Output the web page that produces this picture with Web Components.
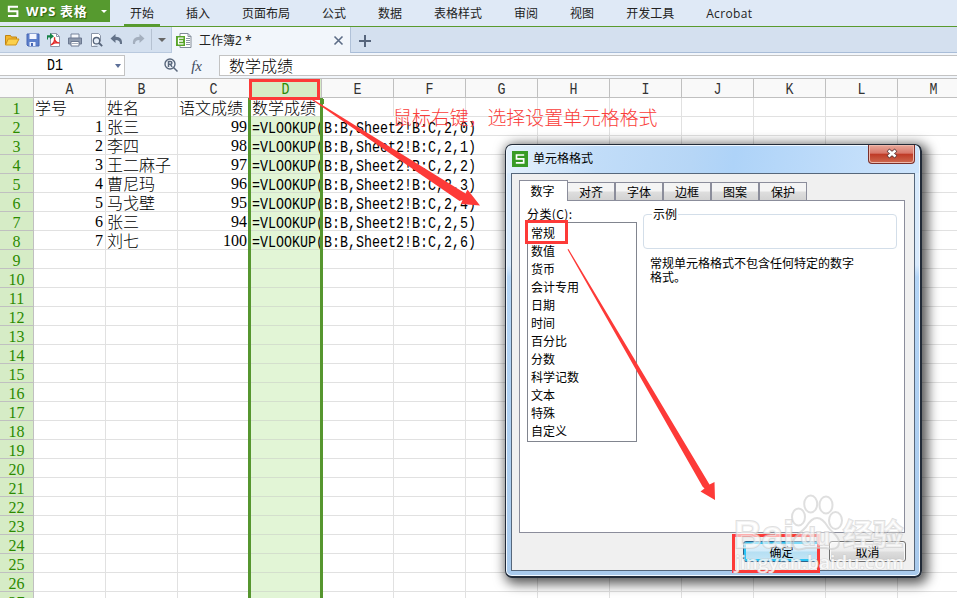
<!DOCTYPE html>
<html lang="zh-CN"><head><meta charset="utf-8"><title>WPS 表格</title>
<style>html,body{margin:0;height:100%;overflow:hidden;background:#fff}</style></head>
<body><wps-app></wps-app>
<script>
const define=(name,html,init)=>customElements.define(name,class extends HTMLElement{
  connectedCallback(){ if(this.shadowRoot)return; this.attachShadow({mode:'open'}).innerHTML=typeof html==='function'?html(this):html; if(init)init(this); }
});
const UI='"Noto Sans","Noto Sans CJK SC",sans-serif';

define('wps-logo',`<style>:host{display:block;flex:none}svg{display:block;width:100%;height:100%}</style>
<svg viewBox="0 0 12 12"><path d="M11 1.2H1.8v4.6h8.6v4.8H1" fill="none" stroke="#fff" stroke-width="2"/></svg>`);

define('menu-bar',`<style>
:host{display:flex;height:26px;background:#dfe9f6;border-bottom:1px solid #5a9a2e;font:12px/28px "Open Sans","Noto Sans CJK SC",sans-serif;color:#222}
.brand{display:flex;align-items:center;box-sizing:border-box;width:110px;height:22px;background:#569a2f;padding-left:7px;color:#fff;font-weight:700;font-size:13px;line-height:22px;text-shadow:1px 1px 1px #2d6010}
wps-logo{width:12px;height:13px;margin-right:7px}
.brand span{white-space:nowrap;width:68px;letter-spacing:.7px}
.brand i{border:3px solid transparent;border-top-color:#fff;border-bottom:0;margin-left:7px}
nav{display:flex;gap:32px;padding-left:20px}
nav span{display:block;white-space:nowrap;height:26px}
nav span:last-child{letter-spacing:.35px}
.on{box-shadow:0 -2px 0 #569a2f inset}
.on{margin:0 -6px;padding:0 6px}
</style><div class="brand"><wps-logo></wps-logo><span>WPS 表格</span><i></i></div>
<nav><span class="on">开始</span><span>插入</span><span>页面布局</span><span>公式</span><span>数据</span><span>表格样式</span><span>审阅</span><span>视图</span><span>开发工具</span><span>Acrobat</span></nav>`);

define('quick-access',`<style>
:host{display:flex;align-items:center;box-sizing:border-box;width:172px;height:26px;background:#d4e0ef;border-right:1px solid #b9c9de;border-bottom:1px solid #b9c9de;padding-left:4px;gap:5px}
svg{width:16px;height:16px;flex:none}
.sep{width:1px;height:21px;background:#b5c1d1;margin:0 -2px 0 0}
.dd{border:4px solid transparent;border-top-color:#666;border-bottom:0;margin-left:3px}
</style>
<svg viewBox="0 0 16 16"><path d="M1.5 13V3.500h5l1 1.500h5v2" fill="#f3b62c" stroke="#c08413"/><path d="M1.500 13l2.700-6H15l-3 6z" fill="#fbd04c" stroke="#cf931d"/></svg>
<svg viewBox="0 0 16 16"><path d="M2 2h12v12H3l-1-1z" fill="#5c7fcb" stroke="#4767b4"/><path d="M4.500 2h7v5h-7z" fill="#f4f7ff"/><path d="M4.500 10h6v4h-6z" fill="#e9effd"/><path d="M6 11h2v3H6z" fill="#4767b4"/></svg>
<svg viewBox="0 0 16 16"><path d="M4.500 1.500h6l3 3v10h-9z" fill="#fff" stroke="#8d98aa"/><path d="M10.500 1.500v3h3" fill="none" stroke="#8d98aa"/><path d="M5 13c3-2 4-5 3.500-7.500C8 8 10 11 13.500 11 10 10 7 11.500 5 13z" fill="#fff" stroke="#e22828" stroke-width="1.400"/><path d="M1 3.200h3V1l4 3.300L4 7.500V5.500H2v2H1z" fill="#168246"/></svg>
<svg viewBox="0 0 16 16"><path d="M4 2h8v5H4z" fill="#f6f8fc" stroke="#76839a"/><path d="M1.500 6h13v6h-13z" fill="#8d99ad" stroke="#6c7991"/><path d="M4 9.500h8v4.500H4z" fill="#fff" stroke="#6c7991"/><path d="M5 11.500h6" stroke="#a7b0be"/></svg>
<svg viewBox="0 0 16 16"><path d="M3.500 14.500v-13h7l2 2v6M3.500 14.500h6" fill="#fff" stroke="#8a95a7"/><circle cx="8.500" cy="8.700" r="3.200" fill="#e6eef8" stroke="#56647a" stroke-width="1.300"/><path d="M11 11l3.200 3.200" stroke="#56647a" stroke-width="1.800"/></svg>
<svg viewBox="0 0 16 16"><path d="M1.500 6.500L6.500 2v2.700c5 0 7 3 6.500 7.300h-2c0-3-1.500-4-4.500-4v3z" fill="#647389"/></svg>
<svg viewBox="0 0 16 16"><path d="M14.500 6.500L9.500 2v2.700c-5 0-7 3-6.500 7.300h2c0-3 1.500-4 4.500-4v3z" fill="#a4afbe"/></svg>
<span class="sep"></span><i class="dd"></i>`);

define('document-tabs',`<style>
:host{display:flex;height:26px;background:#f2f6fb}
.tab{display:flex;align-items:center;width:179px;border-right:1px solid #b0c1d8;box-sizing:border-box;padding:1px 6px 0 4px;font:12px/26px ${UI};color:#222}
.tab svg{width:16px;height:17px;margin-right:7px;flex:none}.tab span{flex:1;white-space:nowrap}
.tab svg.x{width:11px;height:11px;margin:0}
.rest{flex:1;box-sizing:border-box;background:#d4e0ef;border-bottom:1px solid #a9bdd8;padding:8px 0 0 8px}
.rest svg{display:block}
</style><quick-access></quick-access><div class="tab">
<svg viewBox="0 0 16 17"><path d="M4 1.500h8l3 3v11H4z" fill="#fff" stroke="#818b98"/><path d="M12 1.500v3h3M10 6.500h4M10 8.500h4M10 10.500h4M10 12.500h4" fill="none" stroke="#8b95a2"/><path d="M0 4h9v10H0z" fill="#58a42a"/><path d="M7.500 6.200H2M2 9h5M2 11.800h5.500" fill="none" stroke="#fff" stroke-width="1.300"/><path d="M2.500 6v6" stroke="#fff" stroke-width="1.200"/></svg>
<span>工作簿2 *</span><svg class="x" viewBox="0 0 11 11"><path d="M1.500 1.500l8 8m0-8l-8 8" stroke="#5c6c86" stroke-width="1.600"/></svg></div>
<div class="rest"><svg width="12" height="13"><path d="M6 0v12M0 6h12" stroke="#56657c" stroke-width="2"/></svg></div>`);

define('formula-bar',`<style>
:host{display:flex;box-sizing:border-box;height:25px;padding:2px 0 2px;background:#f2f6fb}
.name,.edit{box-sizing:border-box;background:#fff;border:1px solid #c3c3c3}
.name{width:125px;border-left:0;display:flex;align-items:center;padding-left:47px}
.name span{flex:1;height:19px;padding-top:2px}.name i{border:3px solid transparent;border-top:4px solid #5c6f98;border-bottom:0;margin-right:3px}
.fn{width:94px;display:flex;align-items:center;justify-content:flex-end;gap:12px;padding-right:17px;box-sizing:border-box}
.fn b{font:italic 15px/16px "Liberation Serif",serif;color:#3f4b5e}
.edit{flex:1;border-right:0;padding-left:9px;font:300 16px/19px "Noto Sans CJK SC",sans-serif}
</style><div class="name"><span><m-t>D1</m-t></span><i></i></div><div class="fn"><svg width="15" height="15"><circle cx="6" cy="6" r="5" fill="none" stroke="#59677c" stroke-width="1.400"/><path d="M4.500 9V3.500h2a1.400 1.400 0 010 2.800h-2m2 0L8 9M9.500 9.500l4 4" fill="none" stroke="#59677c" stroke-width="1.500"/></svg><b>fx</b></div><div class="edit">数学成绩</div>`);

define('sheet-grid',()=>{
 const C='ABCDEFGHIJKLM'.split('');
 const data=[['1','张三','99'],['2','李四','98'],['3','王二麻子','97'],['4','曹尼玛','96'],['5','马戈壁','95'],['6','张三','94'],['7','刘七','100']];
 let h='<div class="row head"><div class="rh"></div>'+C.map(c=>`<div class="${c=='D'?'sel':''}"><m-t>${c}</m-t></div>`).join('')+'</div>';
 for(let r=1;r<=27;r++){
  let t=[];
  if(r==1)t=['学号','姓名','语文成绩','数学成绩'];
  else if(r<=8){const d=data[r-2];t=[`<p>${d[0]}</p>`,d[1],`<p>${d[2]}</p>`,`<m-t class="f">=VLOOKUP(B:B,Sheet2!B:C,2,${r-2})</m-t>`];}
  h+=`<div class="row"><div class="rh">${r}</div>`+C.map((c,i)=>`<div class="c ${c=='D'?'d'+(r==1?' first':''):''} ${r>1&&r<9&&(c=='E'||c=='F')?'nb':''}">${t[i]||''}</div>`).join('')+'</div>';
 }
 return `<style>
:host{display:block;height:520px;overflow:hidden;background:#fff;font:300 16px/19px "Noto Sans CJK SC",sans-serif;color:#000}
.row{display:grid;grid-template-columns:34px repeat(13,72px);height:19px}
.row>div{box-sizing:border-box;height:19px;border-right:1px solid #e1e1e1;border-bottom:1px solid #e1e1e1;white-space:nowrap;padding-left:1px}
.row>.rh{background:#d6ecc6;border-color:#c0c0c0;color:#2b8a00;text-align:center;padding:0;font:16px/21px "Liberation Serif",serif}
.row.head{height:20px}
.row.head>div{height:20px;background:#f9f9f9;border-color:#c0c0c0;border-top:1px solid #c0c0c0;text-align:center;color:#333;padding:2px 0 0;line-height:17px}
.row.head>.sel{background:#d6ecc6;color:#2b8a00}
p{margin:0;padding-right:2px;text-align:right;font:16px/20px "Liberation Serif",serif}
.row>.d{position:relative;background:#e2f5d6;border-bottom-color:#d4dfcd;padding-left:2px}
.row>.first{background:#fff}
.row>.nb{border-right-color:transparent}
.f{margin-top:3px}
</style>${h}`;
});
define('m-t',`<style>:host{display:block;font:13.33px/17px "Liberation Mono",monospace;transform:scaleY(1.2);transform-origin:50% 53%;position:relative;z-index:1}</style><slot></slot>`);

define('dialog-tab',`<style>
:host{display:block;box-sizing:border-box;width:48px;height:18px;border:1px solid #8b8d9b;border-bottom:0;background:linear-gradient(#f4f4f4 0 48%,#dedede 52%,#d2d2d2);text-align:center;line-height:18px}
:host([active]){width:49px;height:21px;background:#fff;line-height:20px;margin:0 -1px -1px 0;padding-right:2px}
</style><slot></slot>`);
define('push-button',`<style>
:host{display:block;box-sizing:border-box;width:77px;height:21px;border:1px solid #707070;border-radius:3px;background:linear-gradient(#f3f3f3,#ebebeb 48%,#ddd 52%,#cfcfcf);box-shadow:inset 0 0 0 1px #fafafa;text-align:center;line-height:19px}
:host([primary]){border-color:#2c628b;background:linear-gradient(#e5f4fc,#d2ebf9 48%,#b5dff3 52%,#c6e6f6);box-shadow:inset 0 0 0 2px #2cc4f5}
</style><slot></slot>`);

define('format-dialog',`<style>
:host{display:block;box-sizing:border-box;width:417px;height:434px;border:2px solid #222b38;border-width:1px 2px 2px 1px;border-radius:7px;padding:28px 5px 5px 5px;background:linear-gradient(90deg,#e2effb,transparent 90px) 0 0/100% 28px no-repeat,linear-gradient(100deg,#cce3fb,#b6d6f6 45%,#aed3f8 55%,#cde4fc) 0 0/100% 28px no-repeat,linear-gradient(#d8eafc 0 120px,#b4d5f6 132px,#a9caec);box-shadow:inset 0 0 0 1px #f1f8ff,3px 3px 12px 3px rgba(0,0,0,.65);font:12px/14px "Noto Sans CJK SC",sans-serif;color:#000}
header{display:flex;align-items:flex-start;height:28px;margin-top:-28px;padding-left:1px}
.ico{box-sizing:border-box;width:16px;height:16px;background:#389b25;margin:6px 5px 0 0;padding:3px}
wps-logo{width:10px;height:10px}
header span{flex:1;padding-top:6px}
.x{box-sizing:border-box;width:47px;height:19px;border:1px solid #7b302b;border-top:0;border-radius:0 0 4px 4px;background:linear-gradient(#e8a99b,#d8776a 45%,#bf3b27 52%,#ce6a50);box-shadow:inset 0 0 0 1px #eeb9ad;padding-left:16px}
.body{box-sizing:border-box;height:398px;border:1px solid #56677b;background:#f0f0f0;padding:6px 9px 0 7px}
.tabs{display:flex;align-items:flex-end;height:20px}
.panel{box-sizing:border-box;height:333px;border:1px solid #8b8d9b;background:#fff;padding:7px 7px 0 7px;display:grid;grid-template-columns:110px 1fr;column-gap:6px}
ul{box-sizing:border-box;list-style:none;height:220px;margin:0;padding:1px 0 0 3px;border:1px solid #81858f}
li{line-height:18px;height:18px}
.cap{height:14px;line-height:12px;white-space:nowrap;letter-spacing:.4px}
.right{padding:3px 0 0}
fieldset{box-sizing:border-box;height:42px;margin:-4px 0 0;border:1px solid #d3dee9;border-radius:4px;padding:0 8px;min-width:0}
legend{padding:0 1px}.note{padding:7px 40px 0 7px;white-space:nowrap}
.btns{display:flex;justify-content:flex-end;gap:9px;padding-top:8px;margin-right:-1px}
u{text-underline-offset:1px}
</style><header><div class="ico"><wps-logo></wps-logo></div><span>单元格格式</span><div class="x"><svg width="14" height="16"><path d="M3 5l8 7m0-7l-8 7" stroke="#5c3a3a" stroke-width="4"/><path d="M3.500 5.500l7 6m0-6l-7 6" stroke="#fff" stroke-width="2.500"/></svg></div></header>
<div class="body"><div class="tabs"><dialog-tab active>数字</dialog-tab><dialog-tab>对齐</dialog-tab><dialog-tab>字体</dialog-tab><dialog-tab>边框</dialog-tab><dialog-tab>图案</dialog-tab><dialog-tab>保护</dialog-tab></div>
<div class="panel"><div><div class="cap">分类(<u>C</u>):</div><ul><li>常规</li><li>数值</li><li>货币</li><li>会计专用</li><li>日期</li><li>时间</li><li>百分比</li><li>分数</li><li>科学记数</li><li>文本</li><li>特殊</li><li>自定义</li></ul></div>
<div class="right"><fieldset><legend>示例</legend></fieldset><div class="note">常规单元格格式不包含任何特定的数字<br>格式。</div></div></div>
<div class="btns"><push-button primary>确定</push-button><push-button>取消</push-button></div></div>`);

define('mark-layer',`<style>:host{display:block;pointer-events:none}svg{display:block}</style>
<svg width="957" height="598">
<g fill="none" stroke="#fd3a38"><path stroke-width="3" d="M250.500 80.500h68v18h-68z"/><path stroke-width="3" d="M526.500 221.500h40v21h-40z"/><path stroke-width="3" d="M733.500 535.500h85v36h-85z"/></g>
<path fill="#fd3a38" d="M312.500 99L465.500 193.500l2-4L480 205.500l-19-1.500 1.500-4-3 1L312 100z"/>
<path fill="#fd3a38" d="M568.500 249L709.500 484.500l5-2.500.5 18-14.500-8.500 4-3-2-2L567.500 249.500z"/>
<text x="393" y="125" fill="#fa3d3a" font-size="18.900" font-weight="300" font-family="Noto Sans CJK SC,sans-serif">鼠标右键，选择设置单元格格式</text>
</svg>`);
define('water-mark',`<style>:host{display:block;pointer-events:none}svg{display:block}</style>
<svg width="957" height="598"><g fill="#fff" fill-opacity=".6" stroke="#cacaca" stroke-opacity=".6" stroke-width="2">
<ellipse cx="798.500" cy="517" rx="6.500" ry="8.500"/><ellipse cx="810.700" cy="504" rx="6.500" ry="8.500"/><ellipse cx="826" cy="505" rx="6.500" ry="8.500"/><ellipse cx="835.500" cy="520.500" rx="6.500" ry="8.500"/>
<path fill-opacity=".4" d="M817 518c-5 0-8 4-11 9-5 6-13 9-13 16 0 8 7 7 13 5h20c7 2 13 1 13-6 0-6-7-9-11-15-3-5-6-9-11-9z"/>
<g font-family="Liberation Sans,sans-serif" font-weight="700" paint-order="stroke"><text x="734" y="548" font-size="39" textLength="60" lengthAdjust="spacingAndGlyphs">Bai</text><text x="801" y="545" font-size="24" textLength="29" lengthAdjust="spacingAndGlyphs">du</text></g>
<text x="843" y="545" font-size="30" font-weight="700" font-family="Noto Sans CJK SC,sans-serif" paint-order="stroke">经验</text>
<text x="735" y="569" font-size="18" font-weight="600" fill-opacity=".8" stroke-width="1.200" font-family="Open Sans,sans-serif" paint-order="stroke" textLength="169" lengthAdjust="spacingAndGlyphs">jingyan.baidu.com</text></g></svg>`);

define('wps-app',`<style>
:host{display:block;position:relative;width:957px;height:598px;overflow:hidden;background:#fff}
format-dialog{position:absolute;left:505px;top:144px;z-index:3}
mark-layer,water-mark{position:absolute;left:0;top:0;z-index:4}
.col{position:absolute;z-index:2;left:248px;top:98px;width:69px;height:520px;border:solid #56962f;border-width:0 3px}
.knob{position:absolute;z-index:2;left:320px;top:99px;width:4px;height:5px;background:#56962f}
</style><menu-bar></menu-bar><document-tabs></document-tabs><formula-bar></formula-bar>
<sheet-grid></sheet-grid><div class="col"></div><div class="knob"></div><format-dialog></format-dialog><mark-layer></mark-layer><water-mark></water-mark>`);
</script></body></html>
